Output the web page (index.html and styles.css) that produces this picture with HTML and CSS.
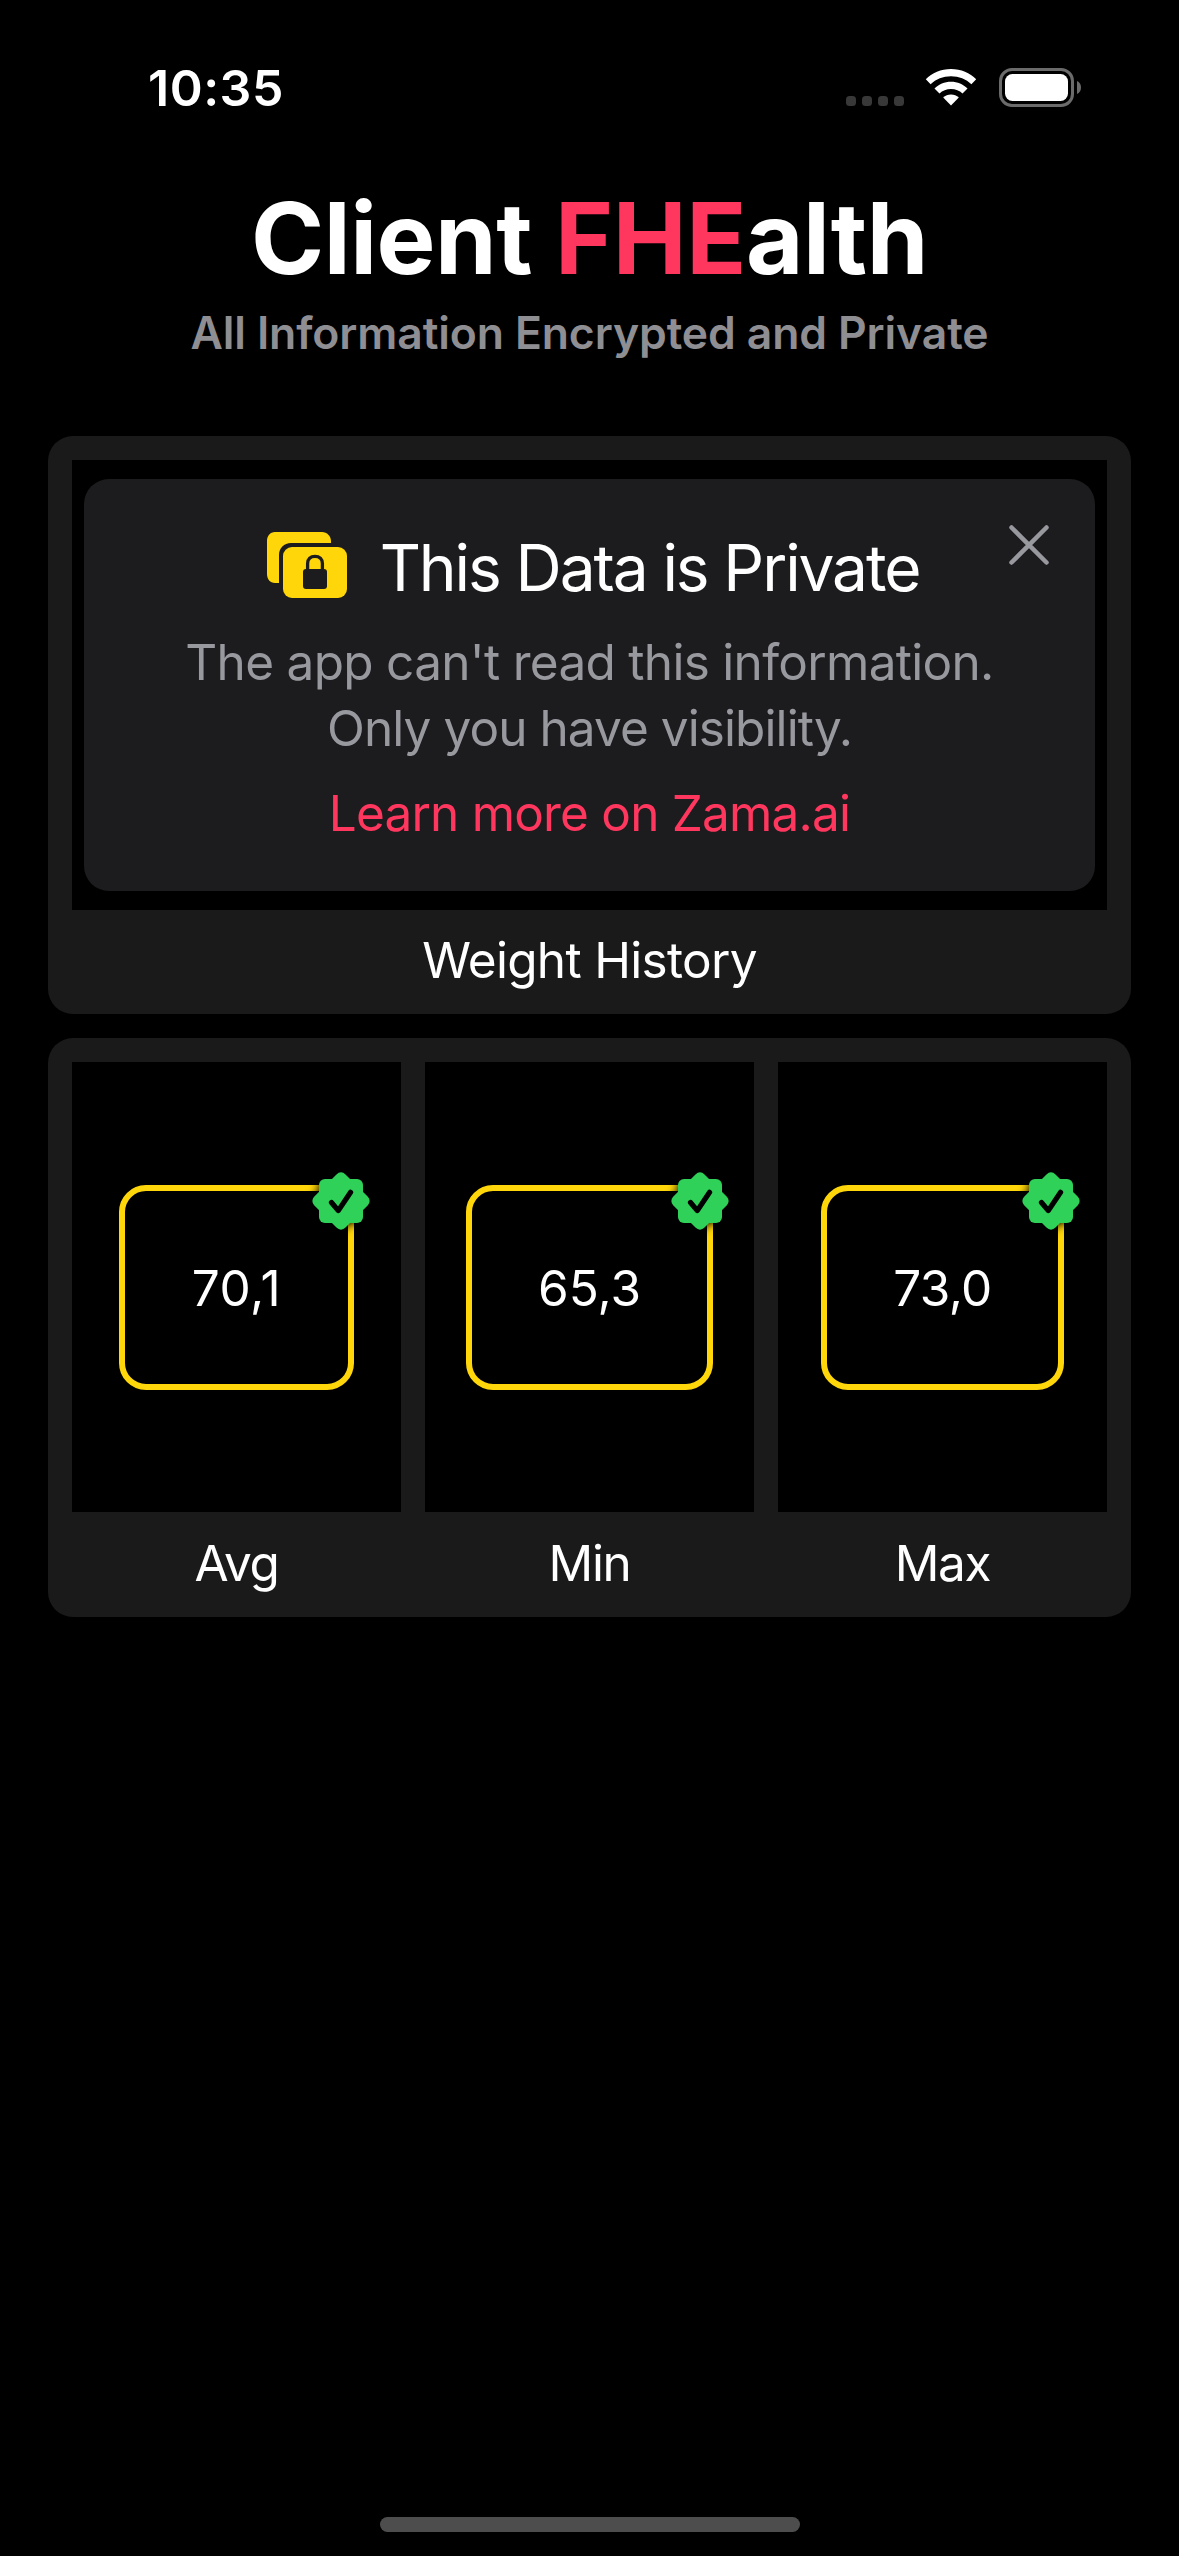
FILE: index.html
```html
<!DOCTYPE html>
<html lang="en">
<head>
<meta charset="utf-8">
<title>Client FHEalth</title>
<link rel="stylesheet" href="styles.css">
</head>
<body>
<svg class="defs" width="0" height="0" aria-hidden="true">
  <symbol id="seal" viewBox="0 0 58 58">
    <g fill="#30d158">
      <rect x="7" y="7" width="44" height="44" rx="6"/>
      <rect x="7" y="7" width="44" height="44" rx="6" transform="rotate(45 29 29)"/>
    </g>
    <path d="M19.5 30.5 26.3 38.6 38.6 20.3" fill="none" stroke="#000" stroke-width="5.2" stroke-linecap="round" stroke-linejoin="round"/>
  </symbol>
</svg>
<div class="screen">
  <header class="status">
    <span class="time">10:35</span>
    <div class="indicators">
      <div class="signal"><i></i><i></i><i></i><i></i></div>
      <svg class="wifi" width="52" height="38" viewBox="0 0 52 38" fill="#fff">
        <path d="M26 1C36 1 45 5 51.2 11.2L46.4 16.2C41 11 34 8.2 26 8.2S11 11 5.6 16.2L.8 11.2C7 5 16 1 26 1Z"/>
        <path d="M26 13.8C32.5 13.8 38.2 16.3 42.5 20.5L37.5 25.5C34.5 22.6 30.5 21 26 21S17.5 22.6 14.5 25.5L9.5 20.5C13.8 16.3 19.5 13.8 26 13.8Z"/>
        <path d="M26 26.5C29 26.5 31.7 27.7 33.8 29.6L26 37.5 18.2 29.6C20.3 27.7 23 26.5 26 26.5Z"/>
      </svg>
      <svg class="battery" width="83" height="39" viewBox="0 0 83 39">
        <rect x="1.5" y="1.5" width="72" height="36" rx="11.5" fill="none" stroke="#6b6b6b" stroke-width="3"/>
        <rect x="6" y="6" width="63" height="27" rx="7.5" fill="#fff"/>
        <path d="M78 13C80.5 14 82 16.5 82 19.5S80.5 25 78 26Z" fill="#6b6b6b"/>
      </svg>
    </div>
  </header>

  <main class="content">
    <h1 class="title">Client <span class="accent">FHE</span>alth</h1>
    <p class="subtitle">All Information Encrypted and Private</p>

    <section class="card">
      <div class="well">
        <div class="notice">
          <svg class="close" width="40" height="40" viewBox="0 0 40 40"><path d="M2.5 2.5 37.5 37.5M37.5 2.5 2.5 37.5" stroke="#98989f" stroke-width="4.5" stroke-linecap="round"/></svg>
          <div class="notice-head">
            <svg class="lock" width="82" height="66" viewBox="0 0 82 66">
              <path d="M9 0H56C61 0 65 4 65 9V11H25C18 11 13 16 13 23V51H9C4 51 1 47 1 42V9C1 4 4 0 9 0Z" fill="#ffd60a"/>
              <rect x="17" y="15" width="64" height="51" rx="9" fill="#ffd60a"/>
              <rect x="37" y="37" width="24" height="20" rx="3" fill="#1c1c1e"/>
              <path d="M41.6 38V31.5C41.6 27 44.5 24.3 49 24.3S56.4 27 56.4 31.5V38" fill="none" stroke="#1c1c1e" stroke-width="3.3"/>
            </svg>
            <h2 class="notice-title">This Data is Private</h2>
          </div>
          <p class="notice-text"><span class="line-a">The app can't read this information.</span><br><span class="line-b">Only you have visibility.</span></p>
          <a class="link">Learn more on Zama.ai</a>
        </div>
      </div>
      <p class="caption history">Weight History</p>
    </section>

    <section class="card stats">
      <div class="stat">
        <div class="well cell"><div class="value avg"><span>70,1</span><svg class="badge"><use href="#seal"/></svg></div></div>
        <p class="caption">Avg</p>
      </div>
      <div class="stat">
        <div class="well cell"><div class="value min"><span>65,3</span><svg class="badge"><use href="#seal"/></svg></div></div>
        <p class="caption">Min</p>
      </div>
      <div class="stat">
        <div class="well cell"><div class="value max"><span>73,0</span><svg class="badge"><use href="#seal"/></svg></div></div>
        <p class="caption">Max</p>
      </div>
    </section>
  </main>
  <div class="home"></div>
</div>
</body>
</html>
```
FILE: styles.css
```css
* { box-sizing: border-box; }
body { margin: 0; background: #000; }
h1, h2, p { margin: 0; font-weight: 400; }
svg { display: block; flex: none; }
.defs { position: absolute; }

.screen {
  width: 1179px;
  height: 2556px;
  background: #000;
  color: #fff;
  font-family: Inter, "Liberation Sans", sans-serif;
  font-size: 49.5px;
  line-height: 66px;
  display: flex;
  flex-direction: column;
  overflow: hidden;
}

.status {
  height: 178px;
  padding: 55px 97px 0 148px;
  display: flex;
  justify-content: space-between;
  align-items: flex-start;
}
.time { font-size: 50px; font-weight: 600; letter-spacing: 0.5px; }
.indicators { display: flex; align-items: flex-start; padding-top: 13px; }
.signal { display: flex; gap: 6px; margin: 28px 21px 0 0; }
.signal i { width: 10px; height: 10px; border-radius: 3.5px; background: #383838; }
.wifi { margin-right: 22px; }

.content { padding: 0 48px; text-align: center; flex: 1; }
.title { font-size: 99px; line-height: 120px; font-weight: 700; letter-spacing: -0.45px; }
.accent { color: #ff375f; }
.subtitle { margin: 8px 0 76px; font-size: 44.5px; line-height: 54px; font-weight: 600; letter-spacing: -0.12px; color: #8e8e93; }

.card { background: #1a1a1a; border-radius: 25px; padding: 24px 24px 0; }
.well { background: #000; height: 450px; }
.card > .well { padding: 19px 12px; }
.notice {
  position: relative;
  height: 412px;
  padding-top: 50px;
  background: #1c1c1e;
  border-radius: 25px;
}
.close { position: absolute; top: 46px; right: 46px; }
.notice-head { display: flex; justify-content: center; align-items: flex-start; gap: 32px; margin-left: 6px; }
.lock { margin-top: 3px; }
.notice-title { font-size: 64px; line-height: 78px; letter-spacing: -2.1px; }
.notice-text { margin: 22px 0 19px; color: #98989f; }
.line-a { letter-spacing: -0.7px; }
.line-b { letter-spacing: -0.92px; }
.link { display: block; color: #ff375f; letter-spacing: -0.8px; }
.caption { height: 104px; padding-top: 17px; letter-spacing: -1.3px; }
.history { letter-spacing: -0.7px; }

.stats { margin-top: 24px; display: grid; grid-template-columns: repeat(3, 1fr); gap: 24px; }
.stats .caption { height: 105px; padding-top: 18px; }
.cell { display: flex; align-items: center; justify-content: center; }
.value {
  position: relative;
  height: 205px;
  padding-top: 1px;
  border: 6px solid #ffd60a;
  border-radius: 27px;
  display: flex;
  align-items: center;
  justify-content: center;
}
.avg { width: 235px; letter-spacing: 0.6px; }
.min { width: 247px; }
.max { width: 243px; letter-spacing: -0.6px; }
.badge { position: absolute; top: -19px; right: -22px; width: 58px; height: 58px; filter: drop-shadow(0 0 5px #000); overflow: visible; }

.home { width: 420px; height: 15px; border-radius: 8px; background: #4d4d4d; margin: 0 auto 24px; }
```
